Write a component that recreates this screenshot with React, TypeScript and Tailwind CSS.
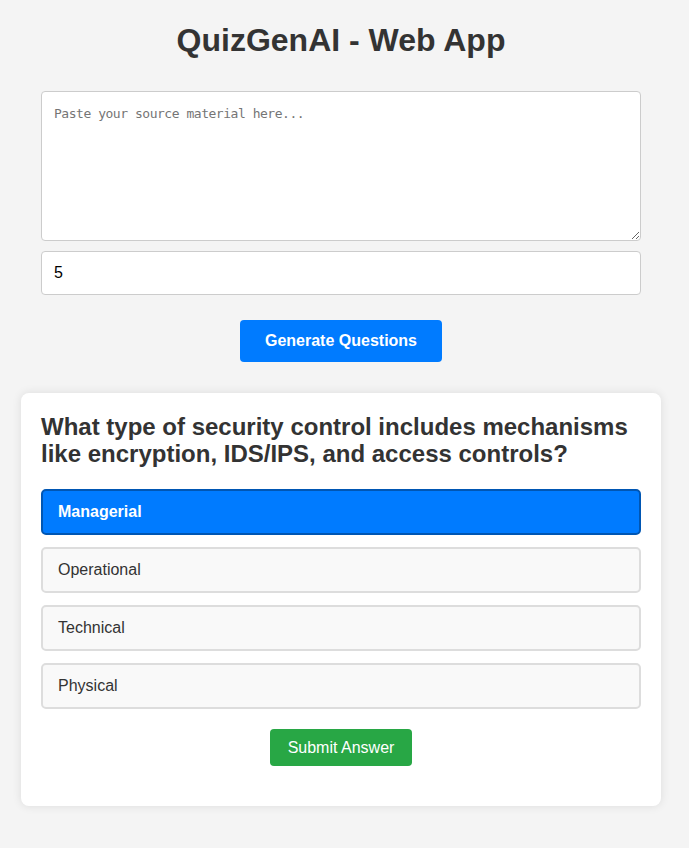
export default function App() {
  const options = ["Managerial", "Operational", "Technical", "Physical"];
  const selected = 0;

  return (
    <main className="min-h-screen bg-[#f4f4f4] px-[21px] pt-[22px] pb-10 font-['Liberation_Sans',Arial,sans-serif] text-[#333]">
      <div className="w-[640px]">
        <h1 className="mb-8 text-center text-[32px] font-bold leading-[37px]">QuizGenAI - Web App</h1>

        <div className="flex flex-col gap-[10px] px-5">
          <textarea
            placeholder="Paste your source material here..."
            className="h-[150px] w-full resize-y rounded border border-[#ccc] bg-white p-3 font-['DejaVu_Sans_Mono',monospace] text-[13px] leading-[20px] tracking-[-0.47px] text-black outline-none placeholder:text-[#757575]"
          />
          <input
            type="number"
            defaultValue={5}
            className="h-[44px] w-full rounded border border-[#ccc] bg-white px-3 text-base text-black outline-none"
          />
        </div>

        <div className="mt-[25px] flex justify-center">
          <button className="h-[42px] w-[202px] rounded bg-[#007bff] text-base font-bold text-white">
            Generate Questions
          </button>
        </div>

        <section className="mt-[31px] rounded-lg bg-white p-5 pb-10 shadow-[0_0_10px_rgba(0,0,0,0.1)]">
          <h2 className="mb-[22px] text-2xl font-bold leading-[27px]">
            What type of security control includes mechanisms like encryption, IDS/IPS, and access controls?
          </h2>

          <div className="flex flex-col gap-3">
            {options.map((opt, i) =>
              i === selected ? (
                <button
                  key={opt}
                  className="h-[46px] rounded-[5px] border-2 border-[#0056b3] bg-[#007bff] px-[15px] text-left text-base font-bold text-white"
                >
                  {opt}
                </button>
              ) : (
                <button
                  key={opt}
                  className="h-[46px] rounded-[5px] border-2 border-[#ddd] bg-[#f9f9f9] px-[15px] text-left text-base text-[#333]"
                >
                  {opt}
                </button>
              )
            )}
          </div>

          <div className="mt-5 flex justify-center">
            <button className="h-[37px] w-[142px] rounded bg-[#28a745] text-base text-white">Submit Answer</button>
          </div>
        </section>
      </div>
    </main>
  );
}
